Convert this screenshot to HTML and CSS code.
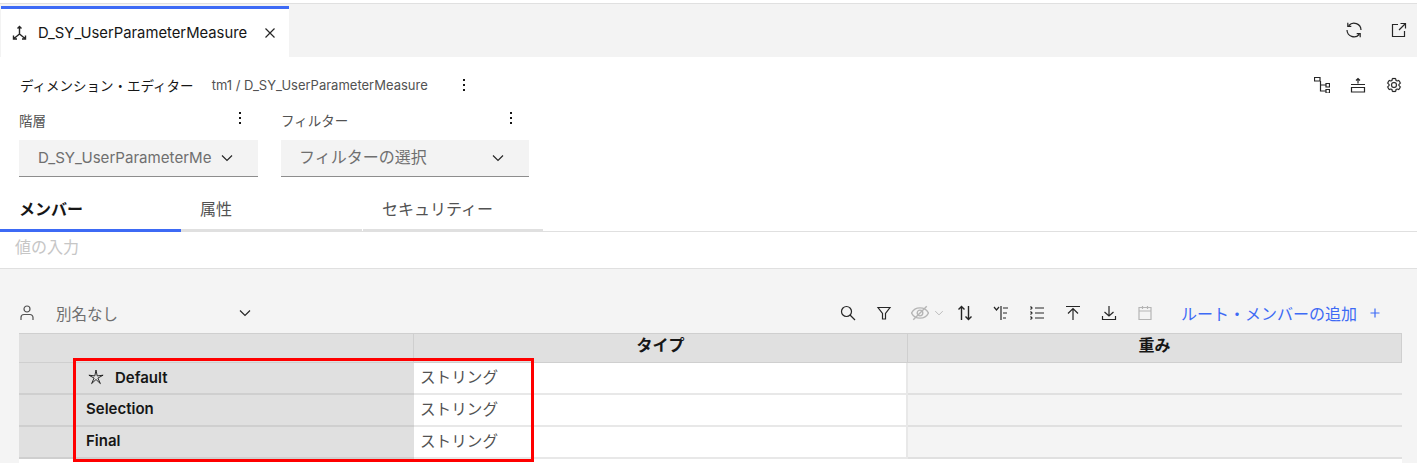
FILE: index.html
```html
<!DOCTYPE html>
<html>
<head>
  <title>Dimension Editor</title>
  <link rel="stylesheet" href="styles.css">
</head>
<body>

  <!-- Top tab bar -->
  <div class="tabbar">
    <div class="tab">
      <svg class="ico heavy" viewBox="0 0 16 16"><path d="M7.500 1.500V9M7.500 9L2 13.500M7.500 9L13 13.500M5.500 3.500l2-2 2 2M1.500 10.500v3.500H5M13.500 10.500v3.500H10"/></svg>
      <span class="tab-name">D_SY_UserParameterMeasure</span>
      <svg class="ico close" viewBox="0 0 16 16"><path d="M3.500 3.500l9 9M12.500 3.500l-9 9"/></svg>
    </div>
    <div class="tabbar-actions">
      <svg class="ico" viewBox="0 0 16 16"><path d="M2.800 3.500A7 7 0 0 1 15 8M1.800.8v3.500h3.500M13.200 12.500A7 7 0 0 1 1 8M14.200 15.200v-3.500h-3.500"/></svg>
      <svg class="ico" viewBox="0 0 16 16"><path d="M7 2.500H1.500v12h12V9M9.500 1.500h5v5M14.500 1.500L8 8"/></svg>
    </div>
  </div>

  <!-- Editor header -->
  <div class="editor">
    <div class="title-row">
      <span class="title">ディメンション・エディター</span>
      <span class="path">tm1 / D_SY_UserParameterMeasure</span>
      <span class="dots"><i></i><i></i><i></i></span>
      <div class="title-actions">
        <svg class="ico" viewBox="0 0 16 16"><path d="M.5.5h5.500V4H.5zM12 6.500h3.500V10H12zM12 12.500h3.500V16H12zM6.500 4v10H12M6.500 8H12"/></svg>
        <svg class="ico" viewBox="0 0 16 16"><path d="M8 1.500v5M6 3.500l2-2 2 2M1 7.500h14M1.500 10.500h13v4.500h-13z"/></svg>
        <svg class="ico solid" viewBox="0 0 32 32"><path d="M27,16.760c0-.25,0-.5,0-.76s0-.51,0-.77l1.920-1.680A2,2,0,0,0,29.300,11L26.940,7a2,2,0,0,0-1.730-1,2,2,0,0,0-.64.1l-2.430.82a11.350,11.350,0,0,0-1.310-.75l-.51-2.520a2,2,0,0,0-2-1.610H13.640a2,2,0,0,0-2,1.610l-.51,2.520a11.480,11.480,0,0,0-1.320.75L7.430,6.060A2,2,0,0,0,6.790,6,2,2,0,0,0,5.060,7L2.700,11a2,2,0,0,0,.41,2.510L5,15.240c0,.25,0,.5,0,.76s0,.51,0,.77L3.110,18.450A2,2,0,0,0,2.700,21L5.060,25a2,2,0,0,0,1.730,1,2,2,0,0,0,.64-.1l2.430-.82a11.350,11.350,0,0,0,1.310.75l.51,2.520a2,2,0,0,0,2,1.610h4.720a2,2,0,0,0,2-1.610l.51-2.520a11.480,11.480,0,0,0,1.320-.75l2.420.82a2,2,0,0,0,.64.1,2,2,0,0,0,1.730-1L29.300,21a2,2,0,0,0-.41-2.510ZM25.210,24l-3.430-1.160a8.860,8.860,0,0,1-2.710,1.570L18.360,28H13.640l-.71-3.550a9.360,9.360,0,0,1-2.700-1.570L6.790,24,4.430,20l2.720-2.400a8.900,8.900,0,0,1,0-3.130L4.430,12,6.790,8l3.430,1.160a8.860,8.860,0,0,1,2.710-1.570L13.640,4h4.720l.71,3.550a9.360,9.360,0,0,1,2.700,1.570L25.210,8,27.570,12l-2.720,2.400a8.900,8.900,0,0,1,0,3.130L27.570,20Z"/><path d="M16,22a6,6,0,1,1,6-6A5.940,5.940,0,0,1,16,22Zm0-10a3.910,3.910,0,0,0-4,4,3.910,3.910,0,0,0,4,4,3.910,3.910,0,0,0,4-4A3.910,3.910,0,0,0,16,12Z"/></svg>
      </div>
    </div>

    <div class="selectors">
      <div class="field hier">
        <div class="field-label"><span>階層</span><span class="dots"><i></i><i></i><i></i></span></div>
        <div class="select">
          <span class="select-text">D_SY_UserParameterMe</span>
          <svg class="ico chev" viewBox="0 0 16 16"><path d="M3 5.500l5 5 5-5"/></svg>
        </div>
      </div>
      <div class="field filt">
        <div class="field-label"><span>フィルター</span><span class="dots"><i></i><i></i><i></i></span></div>
        <div class="select">
          <span class="select-text big">フィルターの選択</span>
          <svg class="ico chev" viewBox="0 0 16 16"><path d="M3 5.500l5 5 5-5"/></svg>
        </div>
      </div>
    </div>

    <div class="subtabs">
      <div class="subtab active">メンバー</div>
      <div class="subtab">属性</div>
      <div class="subtab last">セキュリティー</div>
    </div>
  </div>

  <div class="value-input">値の入力</div>

  <!-- Members panel -->
  <div class="panel">
    <div class="toolbar">
      <svg class="ico person" viewBox="0 0 16 16"><circle cx="8" cy="4" r="3"/><path d="M2 15v-2.500A3 3 0 0 1 5 9.500h6a3 3 0 0 1 3 3V15"/></svg>
      <span class="alias">別名なし</span>
      <svg class="ico chev alias-chev" viewBox="0 0 16 16"><path d="M3 5.500l5 5 5-5"/></svg>
      <div class="tools">
        <svg class="ico" viewBox="0 0 16 16"><circle cx="6.500" cy="6.500" r="5"/><path d="M10 10l5 5"/></svg>
        <svg class="ico" viewBox="0 0 16 16"><path d="M2 2.500h12l-4.500 6V14h-3V8.500z"/></svg>
        <span class="eye">
          <svg class="ico dim" viewBox="0 0 16 16"><path d="M.5 8C2 5 5 3.500 8 3.500s6 1.500 7.500 4.500c-1.500 3-4.500 4.500-7.500 4.500S2 11 .5 8z"/><circle cx="8" cy="8" r="2.500"/><path d="M2 14L14 2"/></svg>
          <svg class="ico dim small" viewBox="0 0 16 16"><path d="M3 5.500l5 5 5-5"/></svg>
        </span>
        <svg class="ico heavy" viewBox="0 0 16 16"><path d="M4.500 15V1.500M1.500 4.500l3-3 3 3M11.500 1v13.500M8.500 11.500l3 3 3-3"/></svg>
        <svg class="ico" viewBox="0 0 16 16"><path d="M1 2l2.500 3L6 2M8 1v14M10 3h5M10 8h4M10 13h3"/></svg>
        <svg class="ico" viewBox="0 0 16 16"><path d="M6 3h9M6 8h9M6 13h9M1.500 1.500L3 3 1.500 4.500M1.500 6.500L3 8 1.500 9.500M1.500 11.500L3 13l-1.500 1.500"/></svg>
        <svg class="ico" viewBox="0 0 16 16"><path d="M1 1.500h14M8 15V3.500M3 8.500l5-5 5 5"/></svg>
        <svg class="ico" viewBox="0 0 16 16"><path d="M1.500 11v3.500h13V11M8 1v10M3.500 7L8 11l4.500-4"/></svg>
        <svg class="ico dim" viewBox="0 0 16 16"><path d="M2 2.500h12v12H2zM2 6h12M5.500 1v3M10.500 1v3"/></svg>
      </div>
      <span class="add-root">ルート・メンバーの追加</span>
      <svg class="ico plus" viewBox="0 0 16 16"><path d="M8 3.500v9M3.500 8h9"/></svg>
    </div>

    <div class="grid">
      <div class="head"></div>
      <div class="head">タイプ</div>
      <div class="head">重み</div>

      <div class="name">
        <svg class="star" viewBox="0 0 16 16"><path d="M8 1l1.200 5.900 5.900-.7-5.200 2.900 2.500 5.500L8 10.500l-4.400 4.100 2.500-5.500L.9 6.200l5.900.7z"/></svg><span class="default-name">Default</span>
      </div>
      <div class="type">ストリング</div>
      <div class="weight"></div>

      <div class="name">Selection</div>
      <div class="type">ストリング</div>
      <div class="weight"></div>

      <div class="name">Final</div>
      <div class="type">ストリング</div>
      <div class="weight"></div>

      <div class="grid-foot"></div>
    </div>

    <!-- annotation drawn over the screenshot -->
    <div class="callout"></div>
  </div>

</body>
</html>
```

FILE: styles.css
```css
* { box-sizing: border-box; }

html, body {
  height: 463px;
}

body {
  margin: 0;
  padding-top: 3px;
  background: #fff;
  color: #161616;
  font-family: "Inter", "Noto Sans CJK JP", sans-serif;
  overflow: hidden;
}

.ico {
  width: 16px;
  height: 16px;
  fill: none;
  stroke: #262626;
  stroke-width: 1.200;
  flex: none;
}

.ico.heavy { stroke-width: 1.400; }
.ico.dim { stroke: #b5b5b5; }
.ico.solid { fill: #262626; stroke: #262626; stroke-width: .4; }

.dots {
  display: inline-flex;
  flex-direction: column;
  gap: 3px;
}

.dots i {
  width: 2px;
  height: 2px;
  background: #161616;
}

/* Top tab bar */
.tabbar {
  display: flex;
  height: 54px;
  background: #f3f3f3;
  border-top: 1px solid #e0e0e0;
}

.tab {
  display: flex;
  align-items: center;
  width: 288px;
  margin-left: 1px;
  margin-top: 2px;
  padding: 0 11px 0 11px;
  background: #fff;
  border-top: 3px solid #3d6af5;
  font-size: 14.800px;
}

.tab-name {
  margin-left: 10px;
}

.close {
  margin-left: auto;
}

.tabbar-actions {
  display: flex;
  gap: 29px;
  margin-left: auto;
  padding: 18px 10px 0 0;
}

/* Editor header */
.editor {
  height: 175px;
  padding-top: 18px;
  border-bottom: 1px solid #e0e0e0;
}

.title-row {
  display: flex;
  align-items: center;
  height: 20px;
  padding: 0 15px 0 20px;
  font-size: 13.500px;
}

.title {
  padding-bottom: 1px;
}

.path {
  margin-left: 18px;
  color: #525252;
  font-size: 13px;
}

.title-row .dots {
  margin-left: 35px;
}

.title-actions {
  display: flex;
  gap: 20px;
  margin-left: auto;
}

.selectors {
  display: flex;
  gap: 23px;
  margin-top: 11px;
  padding-left: 19px;
}

.field-label {
  display: flex;
  justify-content: space-between;
  height: 34px;
  padding: 4px 17px 0 0;
  color: #525252;
  font-size: 13.500px;
}

.field-label .dots {
  margin-top: 2px;
}

.hier { width: 239px; }
.filt { width: 248px; }

.select {
  display: flex;
  align-items: center;
  justify-content: space-between;
  height: 37px;
  padding: 0 23px 0 19px;
  background: #f3f3f3;
  border-bottom: 1px solid #8d8d8d;
  color: #6f6f6f;
  font-size: 15.100px;
}

.select-text {
  margin-bottom: 2px;
}

.select-text.big {
  margin: 0 0 4px -1px;
  font-size: 16px;
}

.subtabs {
  display: flex;
  margin-top: 13px;
}

.subtab {
  width: 181px;
  height: 42px;
  padding: 6px 19px 0;
  border-bottom: 3px solid #e0e0e0;
  color: #525252;
  font-size: 16px;
}

.subtab.last {
  width: 180px;
  margin-left: 1px;
}

.subtab.active {
  border-bottom-color: #3d6af5;
  color: #161616;
  font-weight: 700;
}

.value-input {
  height: 37px;
  padding: 2px 15px 0;
  border-bottom: 1px solid #e0e0e0;
  color: #c6c6c6;
  font-size: 16px;
}

/* Members panel */
.panel {
  position: relative;
  height: 195px;
  background: #f4f4f4;
  padding: 0 15px 0 19px;
}

.toolbar {
  display: flex;
  align-items: center;
  height: 64px;
  padding: 24px 19px 0 0;
}

.person { stroke: #525252; }

.alias {
  margin-left: 21px;
  color: #6f6f6f;
  font-size: 15.500px;
}

.alias-chev {
  margin-left: 119px;
}

.tools {
  display: flex;
  align-items: center;
  gap: 20px;
  margin-left: auto;
}

.eye {
  display: flex;
  align-items: center;
  margin: 0 -8px 0 -1px;
}

.eye .ico { width: 18px; height: 18px; }
.eye .small { width: 12px; height: 12px; margin-left: 4px; }

.add-root {
  margin-left: 28px;
  color: #3d6af5;
  font-size: 16px;
}

.plus {
  margin-left: 10px;
  stroke: #3d6af5;
}

.grid {
  display: grid;
  grid-template-columns: 395px 494px 494px;
  grid-template-rows: 30px 32px 32px 32px 4px;
  font-size: 16px;
}

.head {
  display: flex;
  align-items: center;
  justify-content: center;
  padding-bottom: 9px;
  background: #e0e0e0;
  border-top: 1px solid #cfcfcf;
  border-bottom: 1px solid #cfcfcf;
  border-right: 1px solid #cfcfcf;
  font-weight: 700;
}

.name {
  display: flex;
  align-items: center;
  padding: 0 0 4px 67px;
  background: #e0e0e0;
  border-bottom: 2px solid #cfcfcf;
  font-weight: 600;
  font-size: 15px;
}

.default-name {
  padding-top: 2px;
}

.star {
  width: 16px;
  height: 16px;
  margin: 1px 11px 0 2px;
  fill: none;
  stroke: #161616;
  stroke-width: .9;
}

.type {
  display: flex;
  align-items: center;
  padding: 0 0 4px 6px;
  background: #fff;
  border-bottom: 2px solid #e8e8e8;
  border-right: 2px solid #e8e8e8;
  color: #525252;
  font-size: 15.600px;
}

.weight {
  background: #f4f4f4;
  border-bottom: 2px solid #e0e0e0;
}

.grid-foot {
  grid-column: 1 / 4;
  background: #fff;
}

.callout {
  position: absolute;
  left: 73px;
  top: 89px;
  width: 461px;
  height: 104px;
  border: 3px solid #f00;
}
```
